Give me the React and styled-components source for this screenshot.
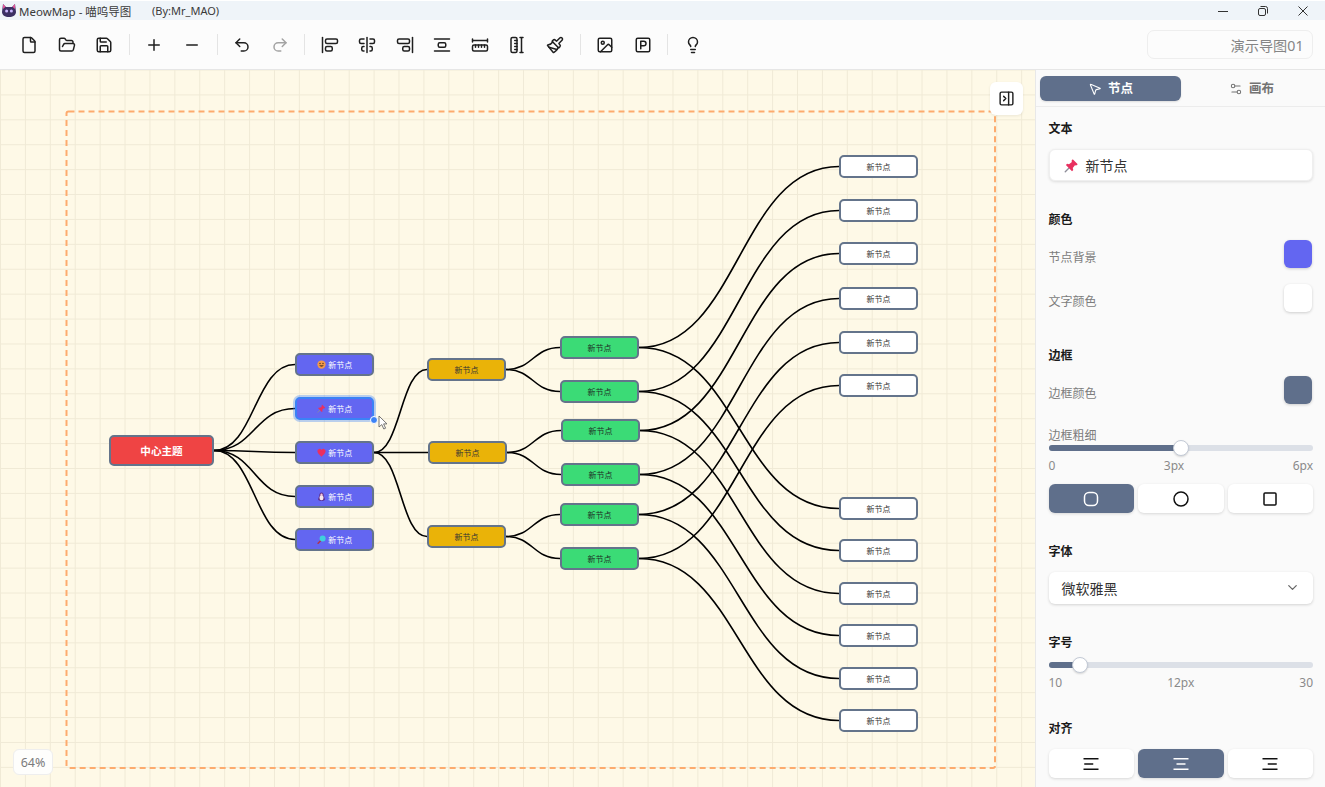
import React from "react";
import styled, { createGlobalStyle } from "styled-components";
import {
  File,
  FolderOpen,
  Save,
  Plus,
  Minus,
  Undo2,
  Redo2,
  AlignStartVertical,
  AlignCenterVertical,
  AlignEndVertical,
  AlignVerticalSpaceAround,
  Paintbrush,
  Image,
  SquareParking,
  Lightbulb,
  PanelRightClose,
  MousePointer2,
  Settings2,
  ChevronDown,
} from "lucide-react";

const FONT = `"Noto Sans", "Noto Sans CJK SC", sans-serif`;
const SLATE = "#5f6f8b";
const CANVAS_TOP = 70;

const GlobalStyle = createGlobalStyle`
  html, body {
    margin: 0;
    padding: 0;
    height: 100%;
    overflow: hidden;
    background: #fff;
  }
  #root {
    height: 100%;
  }
  * {
    box-sizing: border-box;
  }
`;

const Page = styled.div`
  width: 1325px;
  height: 787px;
  display: flex;
  flex-direction: column;
  font-family: ${FONT};
  overflow: hidden;
`;

const TitleBar = styled.div`
  height: 20px;
  flex: none;
  display: flex;
  align-items: center;
  padding-left: 2px;
  background: #eff4f9;
  border-top: 1px solid #fff;
  color: #3a3a3a;
  font-size: 11.5px;
`;

const AppName = styled.span`
  margin-left: 3px;
  width: 133px;
`;

const Author = styled.span`
  font-size: 11px;
`;

const WindowControls = styled.div`
  margin-left: auto;
  display: flex;
`;

const WindowButton = styled.div`
  width: 40px;
  margin-right: ${(p) => p.$mr || 0}px;
  display: flex;
  justify-content: center;
  align-items: center;
  color: #333;
`;

const Toolbar = styled.div`
  height: 50px;
  flex: none;
  display: flex;
  align-items: center;
  padding: 0 12px 0 10.4px;
  background: #fcfcfc;
  border-bottom: 1px solid #e6e6e6;
`;

const ToolButton = styled.div`
  width: 37.5px;
  height: 32px;
  flex: none;
  display: flex;
  justify-content: center;
  align-items: center;
  color: ${(p) => (p.$disabled ? "#a3a3a3" : "#1f1f1f")};
`;

const Divider = styled.div`
  width: 1px;
  height: 21px;
  margin: 0 5.9px;
  flex: none;
  background: #e4e4e4;
`;

const DocName = styled.div`
  margin-left: auto;
  width: 166px;
  height: 29px;
  padding-right: 8.5px;
  display: flex;
  align-items: center;
  justify-content: flex-end;
  border: 1px solid #eeeeee;
  border-radius: 7px;
  color: #858585;
  font-size: 14.2px;
`;

const Main = styled.div`
  flex: 1;
  display: flex;
  min-height: 0;
`;

const Canvas = styled.div`
  position: relative;
  flex: 1;
  overflow: hidden;
  background-color: #fef9e7;
  background-image: linear-gradient(to right, #f0ead6 1px, transparent 1px),
    linear-gradient(to bottom, #f0ead6 1px, transparent 1px);
  background-size: 24.92px 24.92px;
  background-position: 0 -0.5px;
`;

const EdgeLayer = styled.svg`
  position: absolute;
  inset: 0;
  width: 100%;
  height: 100%;
`;

const NODE_COLORS = {
  root: { bg: "#ef4444", fg: "#fff" },
  topic: { bg: "#6366f1", fg: "#fff" },
  branch: { bg: "#eab308", fg: "#333" },
  item: { bg: "#3bdb76", fg: "#1f2f27" },
  leaf: { bg: "#fff", fg: "#333" },
};

const Node = styled.div`
  position: absolute;
  display: flex;
  align-items: center;
  justify-content: center;
  gap: 2.5px;
  padding-bottom: 1px;
  border: 2px solid ${(p) => (p.$selected ? "#3b82f6" : "#64748b")};
  border-radius: 5px;
  background: ${(p) => NODE_COLORS[p.$kind].bg};
  color: ${(p) => NODE_COLORS[p.$kind].fg};
  font-size: ${(p) => (p.$kind === "root" ? 10.6 : 8)}px;
  font-weight: ${(p) => (p.$kind === "root" ? 700 : 400)};
  box-shadow: ${(p) => (p.$selected ? "0 0 0 2px rgba(59,130,246,.35)" : "none")};
`;

const ResizeHandle = styled.div`
  position: absolute;
  right: -5.5px;
  bottom: -5.5px;
  width: 8px;
  height: 8px;
  border-radius: 50%;
  background: #3b82f6;
  border: 1px solid #fff;
`;

const PointerWrap = styled.svg`
  position: absolute;
  left: 378px;
  top: 345px;
`;

const FloatButton = styled.div`
  position: absolute;
  left: 990px;
  top: 12px;
  width: 33px;
  height: 33px;
  display: flex;
  justify-content: center;
  align-items: center;
  background: #fff;
  border-radius: 6px;
  box-shadow: 0 1px 3px rgba(0, 0, 0, 0.08);
  color: #1f1f1f;
`;

const ZoomBadge = styled.div`
  position: absolute;
  left: 13px;
  bottom: 12px;
  width: 40px;
  height: 26px;
  display: flex;
  justify-content: center;
  align-items: center;
  background: #fefefc;
  border: 1px solid #eeeeee;
  border-radius: 6px;
  color: #7b7b7b;
  font-size: 12.5px;
`;

const Panel = styled.div`
  width: 290px;
  flex: none;
  background: #fafafa;
  border-left: 1px solid #e8e8e8;
`;

const Tabs = styled.div`
  height: 37px;
  padding: 6px 0 5px 4px;
  display: flex;
  border-bottom: 1px solid #ececec;
`;

const Tab = styled.div`
  width: 141px;
  display: flex;
  justify-content: center;
  align-items: center;
  gap: 6px;
  border-radius: 6px;
  background: ${(p) => (p.$active ? SLATE : "transparent")};
  color: ${(p) => (p.$active ? "#fff" : "#737373")};
  font-size: 12.5px;
  font-weight: 700;
  box-shadow: ${(p) => (p.$active ? "0 1px 2px rgba(0,0,0,.12)" : "none")};
`;

const TabLabel = styled.span`
  position: relative;
  top: -1px;
`;

const PanelBody = styled.div`
  padding: 13px 12px 0 12.5px;
`;

const SectionTitle = styled.div`
  height: 18px;
  line-height: 18px;
  margin-top: ${(p) => p.$mt || 0}px;
  margin-bottom: ${(p) => p.$mb ?? 11}px;
  color: #1a1a1a;
  font-size: 12px;
  font-weight: 700;
`;

const TextField = styled.div`
  height: 32px;
  padding-left: 14px;
  display: flex;
  align-items: center;
  gap: 7px;
  background: #fff;
  border: 1px solid #efefef;
  border-radius: 6px;
  box-shadow: 0 1px 3px rgba(0, 0, 0, 0.12);
  color: #333;
  font-size: 14px;
`;

const ColorRow = styled.div`
  height: 28px;
  margin-bottom: ${(p) => p.$mb || 0}px;
  display: flex;
  align-items: center;
  justify-content: space-between;
  color: #7c7c7c;
  font-size: 12px;
`;

const ColorLabel = styled.span`
  margin-top: 6px;
`;

const Swatch = styled.div`
  width: 28px;
  height: 28px;
  margin-right: 1px;
  border-radius: 6px;
  background: ${(p) => p.$color};
  box-shadow: 0 1px 3px rgba(0, 0, 0, 0.18);
`;

const FieldLabel = styled.div`
  height: 18px;
  line-height: 18px;
  margin-top: 23px;
  color: #7c7c7c;
  font-size: 12px;
`;

const Track = styled.div`
  position: relative;
  height: 6px;
  border-radius: 3px;
  background: #dce0e7;
`;

const TrackFill = styled.div`
  height: 100%;
  width: ${(p) => p.$pct}%;
  border-radius: 3px;
  background: ${SLATE};
`;

const Thumb = styled.div`
  position: absolute;
  top: -5px;
  left: ${(p) => p.$pct}%;
  width: 16px;
  height: 16px;
  margin-left: -8px;
  border-radius: 50%;
  background: #fff;
  border: 1px solid #c3cad6;
  box-shadow: 0 1px 2px rgba(0, 0, 0, 0.15);
`;

const ScaleLabels = styled.div`
  height: 16px;
  line-height: 16px;
  margin-top: 7px;
  display: flex;
  justify-content: space-between;
  color: #8a8a8a;
  font-size: 12px;
`;

const ButtonGroup = styled.div`
  margin-top: ${(p) => p.$mt || 0}px;
  display: grid;
  grid-template-columns: repeat(3, 1fr);
  gap: 4px;
`;

const GroupButton = styled.div`
  height: 29px;
  display: flex;
  justify-content: center;
  align-items: center;
  border-radius: 6px;
  background: ${(p) => (p.$active ? SLATE : "#fff")};
  color: ${(p) => (p.$active ? "#fff" : "#111")};
  box-shadow: 0 1px 3px rgba(0, 0, 0, 0.14);
`;

const Select = styled.div`
  height: 32px;
  padding: 0 13px 1px;
  display: flex;
  align-items: center;
  justify-content: space-between;
  background: #fff;
  border-radius: 6px;
  box-shadow: 0 1px 3px rgba(0, 0, 0, 0.16);
  color: #333;
  font-size: 14px;
`;

// ---- drawings ----

const Logo = () => (
  <svg width="14" height="15" viewBox="0 0 14 15">
    <path d="M1 1l3 3h6l3-3 1 8c0 3-3 5-7 5s-7-2-7-5z" fill="#3b2f63" />
    <path d="M1 1l2.6 2.8L1 6zM13 1l-2.600 2.800L13 6z" fill="#e0559a" />
    <circle cx="4.600" cy="8" r="1.500" fill="#c9b6ff" />
    <circle cx="9.400" cy="8" r="1.500" fill="#c9b6ff" />
  </svg>
);

const RulerIcon = ({ vertical }) => (
  <svg
    width="18"
    height="18"
    viewBox="0 0 24 24"
    fill="none"
    stroke="currentColor"
    strokeWidth="2"
    strokeLinecap="round"
    strokeLinejoin="round"
  >
    <g transform={vertical ? "rotate(90 12 12)" : undefined}>
      <path d="M2 8V4M22 8V4M22 6H2M6 15v-3M10 15v-3M14 15v-3M18 15v-3" />
      <rect x="2" y="12" width="20" height="8" rx="2" />
    </g>
  </svg>
);

const PinEmoji = ({ size }) => (
  <svg width={size} height={size} viewBox="0 0 24 24">
    <path d="M2 22l8-8" stroke="#8d8d99" strokeWidth="2.200" strokeLinecap="round" />
    <path
      d="M14 2l8 8-2.500 2-2-.6-3.500 4.600.8 3-2 2L3 11.200l2-2 3 .8 4.600-3.500L12 4.500z"
      fill="#e8305f"
    />
  </svg>
);

const SmileEmoji = ({ size }) => (
  <svg width={size} height={size} viewBox="0 0 24 24">
    <circle cx="12" cy="12" r="11" fill="#f2994a" />
    <circle cx="8" cy="9.500" r="2" fill="#5b3a1e" />
    <circle cx="16" cy="9.500" r="2" fill="#5b3a1e" />
    <path d="M6 14c2 5 10 5 12 0z" fill="#5b3a1e" />
  </svg>
);

const HeartEmoji = ({ size }) => (
  <svg width={size} height={size} viewBox="0 0 24 24">
    <path
      d="M12 23C5 17 1 13 1 8a6 6 0 0 1 11-3 6 6 0 0 1 11 3c0 5-4 9-11 15z"
      fill="#ec2f5f"
    />
  </svg>
);

const PenguinEmoji = ({ size }) => (
  <svg width={size} height={size} viewBox="0 0 24 24">
    <path d="M12 1c4 0 6 4 6 9l3 9c0 3-4 4-9 4s-9-1-9-4l3-9c0-5 2-9 6-9z" fill="#5b2a86" />
    <ellipse cx="12" cy="15" rx="5.500" ry="7" fill="#f5e6ee" />
    <circle cx="12" cy="7" r="3" fill="#f7c7d8" />
  </svg>
);

const LensEmoji = ({ size }) => (
  <svg width={size} height={size} viewBox="0 0 24 24">
    <path d="M3 22l8-8" stroke="#b3324a" strokeWidth="4" strokeLinecap="round" />
    <circle cx="15" cy="9" r="8" fill="#3fd0dc" />
  </svg>
);

const LinesIcon = ({ align }) => {
  const short = { left: [3, 15], center: [6, 18], right: [9, 21] }[align];
  return (
    <svg width="18" height="18" viewBox="0 0 24 24" stroke="currentColor" strokeWidth="2">
      <path d="M2 5h20" />
      <path d={`M${short[0]} 12h${short[1] - short[0]}`} />
      <path d="M2 19h20" />
    </svg>
  );
};

// ---- diagram data (page coordinates) ----

const NODE_W = 79;
const NODE_H = 23;

const ROOT = { x: 109, y: 435, w: 105, h: 31, text: "中心主题", kind: "root" };

const TOPICS = [
  { x: 295, y: 353, emoji: SmileEmoji },
  { x: 295, y: 397, emoji: PinEmoji, selected: true },
  { x: 295, y: 441, emoji: HeartEmoji },
  { x: 295, y: 485, emoji: PenguinEmoji },
  { x: 295, y: 528, emoji: LensEmoji },
].map((n) => ({ ...n, kind: "topic", text: "新节点" }));

const BRANCHES = [
  { x: 427, y: 358 },
  { x: 428, y: 441 },
  { x: 427, y: 525 },
].map((n) => ({ ...n, kind: "branch", text: "新节点" }));

const ITEMS = [
  { x: 560, y: 336 },
  { x: 560, y: 380 },
  { x: 561, y: 419 },
  { x: 561, y: 463 },
  { x: 560, y: 503 },
  { x: 560, y: 547 },
].map((n) => ({ ...n, kind: "item", text: "新节点" }));

const LEAF_TOP = [155, 199, 242, 287, 331, 374];
const LEAF_BOTTOM = [497, 539, 582, 624, 667, 709];

const LEAVES = [...LEAF_TOP, ...LEAF_BOTTOM].map((y) => ({
  x: 839,
  y,
  kind: "leaf",
  text: "新节点",
}));

const rightOf = (n) => ({ x: n.x + (n.w || NODE_W), y: n.y + (n.h || NODE_H) / 2 });
const leftOf = (n) => ({ x: n.x, y: n.y + (n.h || NODE_H) / 2 });

const link = (from, to) => {
  const a = rightOf(from);
  const b = leftOf(to);
  const mid = (a.x + b.x) / 2;
  return `M${a.x} ${a.y}C${mid} ${a.y} ${mid} ${b.y} ${b.x} ${b.y}`;
};

const EDGES = [
  ...TOPICS.map((t) => link(ROOT, t)),
  ...BRANCHES.map((b) => link(TOPICS[2], b)),
  ...ITEMS.map((it, i) => link(BRANCHES[Math.floor(i / 2)], it)),
  ...ITEMS.map((it, i) => link(it, LEAVES[i])),
  ...ITEMS.map((it, i) => link(it, LEAVES[i + 6])),
];

const ALL_NODES = [ROOT, ...TOPICS, ...BRANCHES, ...ITEMS, ...LEAVES];

const MindNode = ({ node }) => {
  const Emoji = node.emoji;
  return (
    <Node
      $kind={node.kind}
      $selected={node.selected}
      style={{
        left: node.x,
        top: node.y - CANVAS_TOP,
        width: node.w || NODE_W,
        height: node.h || NODE_H,
      }}
    >
      {Emoji && <Emoji size={9} />}
      <span>{node.text}</span>
      {node.selected && <ResizeHandle />}
    </Node>
  );
};

const FILE_TOOLS = [File, FolderOpen, Save];
const EDIT_TOOLS = [Plus, Minus];
const ALIGN_TOOLS = [AlignStartVertical, AlignCenterVertical, AlignEndVertical, AlignVerticalSpaceAround];
const INSERT_TOOLS = [Image, SquareParking];

const Tool = ({ icon: Icon, disabled }) => (
  <ToolButton $disabled={disabled}>
    <Icon size={18} strokeWidth={2} />
  </ToolButton>
);

const App = () => {
  return (
    <Page>
      <GlobalStyle />
      <TitleBar>
        <Logo />
        <AppName>MeowMap - 喵呜导图</AppName>
        <Author>(By:Mr_MAO)</Author>
        <WindowControls>
          <WindowButton>
            <svg width="10" height="10" viewBox="0 0 10 10" stroke="currentColor" fill="none">
              <path d="M0 5.500h10" />
            </svg>
          </WindowButton>
          <WindowButton>
            <svg width="10" height="10" viewBox="0 0 10 10" stroke="currentColor" fill="none">
              <rect x="0.500" y="2.500" width="7" height="7" rx="1.500" />
              <path d="M2.500 0.500h5a2 2 0 0 1 2 2v5" />
            </svg>
          </WindowButton>
          <WindowButton $mr={2}>
            <svg width="10" height="10" viewBox="0 0 10 10" stroke="currentColor" fill="none">
              <path d="M0.500 0.500l9 9M9.500 0.500l-9 9" />
            </svg>
          </WindowButton>
        </WindowControls>
      </TitleBar>

      <Toolbar>
        {FILE_TOOLS.map((icon, i) => (
          <Tool key={i} icon={icon} />
        ))}
        <Divider />
        {EDIT_TOOLS.map((icon, i) => (
          <Tool key={i} icon={icon} />
        ))}
        <Divider />
        <Tool icon={Undo2} />
        <Tool icon={Redo2} disabled />
        <Divider />
        {ALIGN_TOOLS.map((icon, i) => (
          <Tool key={i} icon={icon} />
        ))}
        <ToolButton>
          <RulerIcon />
        </ToolButton>
        <ToolButton>
          <RulerIcon vertical />
        </ToolButton>
        <Tool icon={Paintbrush} />
        <Divider />
        {INSERT_TOOLS.map((icon, i) => (
          <Tool key={i} icon={icon} />
        ))}
        <Divider />
        <Tool icon={Lightbulb} />
        <DocName>演示导图01</DocName>
      </Toolbar>

      <Main>
        <Canvas>
          <EdgeLayer viewBox={`0 ${CANVAS_TOP} 1035 717`} preserveAspectRatio="xMinYMin">
            <rect
              x="66.500"
              y="111.500"
              width="928.500"
              height="656.500"
              rx="2"
              fill="none"
              stroke="#fdab6e"
              strokeWidth="2"
              strokeDasharray="6 4"
            />
            {EDGES.map((d, i) => (
              <path key={i} d={d} fill="none" stroke="#000" strokeWidth="1.6" />
            ))}
          </EdgeLayer>
          {ALL_NODES.map((node, i) => (
            <MindNode key={i} node={node} />
          ))}
          <PointerWrap width="10" height="15" viewBox="0 0 10 15">
            <path d="M1 1v11l2.800-2.400L5.800 14l1.800-.8-2-4.300H9z" fill="#fff" stroke="#666" strokeWidth="0.900" />
          </PointerWrap>
          <FloatButton>
            <PanelRightClose size={17} strokeWidth={2} />
          </FloatButton>
          <ZoomBadge>64%</ZoomBadge>
        </Canvas>

        <Panel>
          <Tabs>
            <Tab $active>
              <MousePointer2 size={14} strokeWidth={1.8} />
              <TabLabel>节点</TabLabel>
            </Tab>
            <Tab>
              <Settings2 size={14} strokeWidth={1.8} />
              <TabLabel>画布</TabLabel>
            </Tab>
          </Tabs>
          <PanelBody>
            <SectionTitle>文本</SectionTitle>
            <TextField>
              <PinEmoji size={15} />
              新节点
            </TextField>

            <SectionTitle $mt={30}>颜色</SectionTitle>
            <ColorRow $mb={16}>
              <ColorLabel>节点背景</ColorLabel>
              <Swatch $color="#6366f1" />
            </ColorRow>
            <ColorRow>
              <ColorLabel>文字颜色</ColorLabel>
              <Swatch $color="#ffffff" />
            </ColorRow>

            <SectionTitle $mt={35}>边框</SectionTitle>
            <ColorRow>
              <ColorLabel>边框颜色</ColorLabel>
              <Swatch $color={SLATE} />
            </ColorRow>
            <FieldLabel>边框粗细</FieldLabel>
            <Track>
              <TrackFill $pct={50} />
              <Thumb $pct={50} />
            </Track>
            <ScaleLabels>
              <span>0</span>
              <span>3px</span>
              <span>6px</span>
            </ScaleLabels>
            <ButtonGroup $mt={10}>
              <GroupButton $active>
                <svg width="16" height="16" viewBox="0 0 16 16" fill="none" stroke="currentColor" strokeWidth="1.500">
                  <rect x="1.500" y="1.500" width="13" height="13" rx="4.500" />
                </svg>
              </GroupButton>
              <GroupButton>
                <svg width="16" height="16" viewBox="0 0 16 16" fill="none" stroke="currentColor" strokeWidth="1.500">
                  <circle cx="8" cy="8" r="7" />
                </svg>
              </GroupButton>
              <GroupButton>
                <svg width="16" height="16" viewBox="0 0 16 16" fill="none" stroke="currentColor" strokeWidth="1.500">
                  <rect x="2" y="2" width="12" height="12" rx="1" />
                </svg>
              </GroupButton>
            </ButtonGroup>

            <SectionTitle $mt={30}>字体</SectionTitle>
            <Select>
              微软雅黑
              <ChevronDown size={15} color="#666" />
            </Select>

            <SectionTitle $mt={30} $mb={10}>
              字号
            </SectionTitle>
            <Track>
              <TrackFill $pct={12} />
              <Thumb $pct={12} />
            </Track>
            <ScaleLabels>
              <span>10</span>
              <span>12px</span>
              <span>30</span>
            </ScaleLabels>

            <SectionTitle $mt={29}>对齐</SectionTitle>
            <ButtonGroup>
              <GroupButton>
                <LinesIcon align="left" />
              </GroupButton>
              <GroupButton $active>
                <LinesIcon align="center" />
              </GroupButton>
              <GroupButton>
                <LinesIcon align="right" />
              </GroupButton>
            </ButtonGroup>
          </PanelBody>
        </Panel>
      </Main>
    </Page>
  );
};

export default App;
